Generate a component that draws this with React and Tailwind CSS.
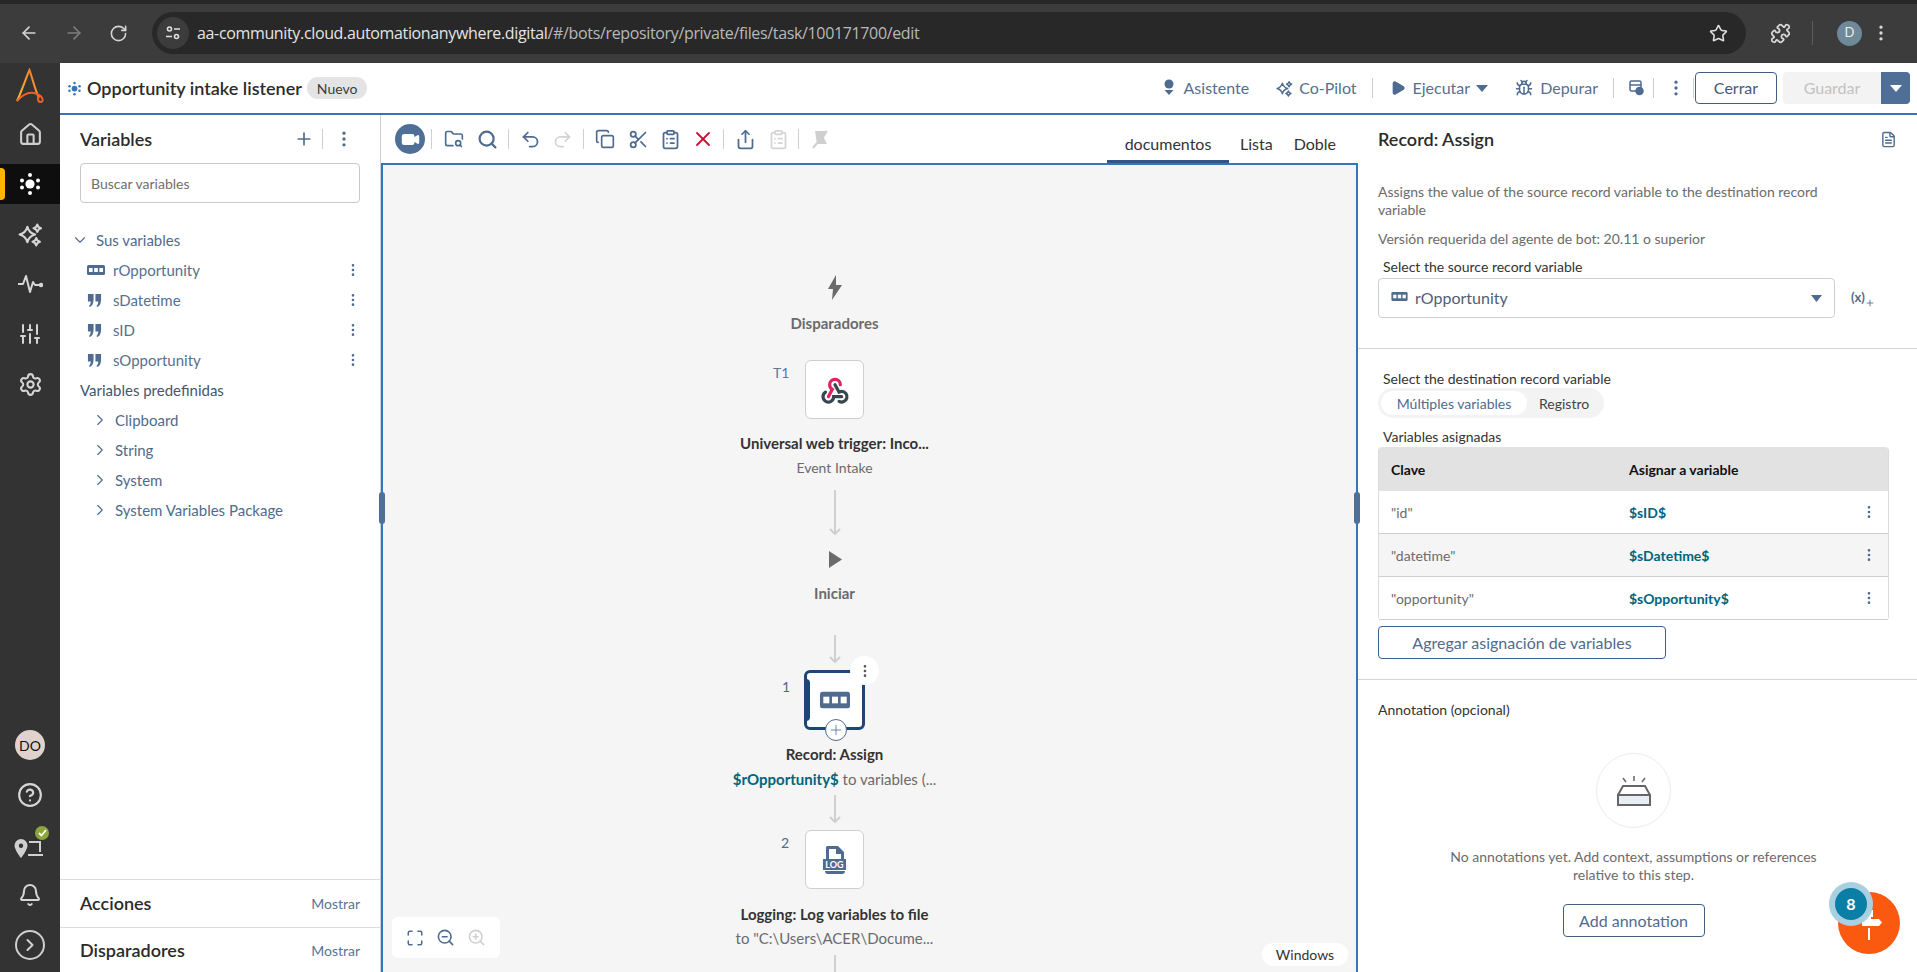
import React from 'react';
import { ArrowLeft, ArrowRight, RotateCw, Star, Puzzle, EllipsisVertical, House, SlidersVertical, Settings, CircleHelp, Bell, ChevronRight, ChevronDown, Plus, Search, Undo2, Redo2, Copy, Scissors, ClipboardList, X, Share, Bug, Play, FileText, Maximize, ZoomIn, ZoomOut, FolderSearch, Video } from 'lucide-react';

const FONT = "font-['Lato','Open_Sans',sans-serif]";
const Dots = ({ c = '#fff', className = '' }) => (
  <svg viewBox="0 0 24 24" className={className}>
    <circle cx="12" cy="12" r="4.6" fill={c} />
    {[[12, 3], [12, 21], [4, 8.5], [20, 8.5], [4, 15.5], [20, 15.5]].map(([x, y], i) => <circle key={i} cx={x} cy={y} r="2" fill={c} />)}
  </svg>
);
const star = (x, y, r) => `M${x} ${y - r}Q${x + r * .2} ${y - r * .2} ${x + r} ${y}Q${x + r * .2} ${y + r * .2} ${x} ${y + r}Q${x - r * .2} ${y + r * .2} ${x - r} ${y}Q${x - r * .2} ${y - r * .2} ${x} ${y - r}Z`;
const Sparkle = ({ c, className, w = 2 }) => (
  <svg viewBox="0 0 24 24" className={className} fill="none" stroke={c} strokeWidth={w} strokeLinejoin="round">
    <path d={star(9, 12, 7.5)} /><path d={star(18.5, 6, 3.6)} /><path d={star(17.5, 19, 3.6)} />
  </svg>
);
const Rec = ({ className }) => (
  <svg viewBox="0 0 18 10" className={className}>
    <rect width="18" height="10" rx="1.5" fill="#4f6b8f" />
    <rect x="2" y="3" width="3.6" height="4" fill="#fff" /><rect x="7.2" y="3" width="3.6" height="4" fill="#fff" /><rect x="12.4" y="3" width="3.6" height="4" fill="#fff" />
  </svg>
);
const Quote = ({ className }) => (
  <svg viewBox="0 0 16 16" className={className} fill="#4f6b8f">
    <path d="M1 1h6v6.5C7 11 5.5 14 3 15L2 13.8C3.4 12.8 4 11 4 9H1zM9 1h6v6.5c0 3.5-1.5 6.5-4 7.500L10 13.800c1.400-1 2-2.800 2-4.800H9z" />
  </svg>
);
const Arrow = ({ h, className = '' }) => (
  <svg width="14" height={h} viewBox={`0 0 14 ${h}`} className={className} fill="none" stroke="#cfcfcf" strokeWidth="2">
    <path d={`M7 0V${h - 1}M2 ${h - 6}L7 ${h - 1}L12 ${h - 6}`} />
  </svg>
);
const Sep = ({ h = 'h-5' }) => <div className={`w-px ${h} bg-[#cfcfcf]`} />;
const VarRow = ({ icon, name }) => (
  <div className="flex h-[30px] items-center pl-[27px] pr-[19px]">
    <div className="flex w-[26px] items-center">{icon}</div>
    <span className="flex-1 text-[15px] text-[#56708f]">{name}</span>
    <EllipsisVertical size={16} color="#4f6b8f" />
  </div>
);
const TreeRow = ({ name }) => (
  <div className="flex h-[30px] items-center pl-[31px] text-[15px] text-[#4f6b8f]">
    <ChevronRight size={18} color="#4f6b8f" strokeWidth={1.5} className="mr-[6px]" />
    {name}
  </div>
);
const NavCell = ({ children, active }) => (
  <div className="flex h-[50px] shrink-0 items-center justify-center">
    {active ? (
      <div className="relative flex h-10 w-full items-center justify-center bg-[#0e0e0e]">
        <div className="absolute left-0 top-1 h-8 w-[5px] rounded-r bg-[#ffb500]" />
        {children}
      </div>
    ) : children}
  </div>
);
const TB = ({ x, children }) => <div className={`flex h-8 items-center justify-center ${x}`}>{children}</div>;
const Row = ({ k, v, alt }) => (
  <div className={`flex h-[43px] items-center border-b border-[#cfcfcf] pl-3 pr-[11px] text-[14px] ${alt ? 'bg-[#f5f5f5]' : 'bg-white'}`}>
    <span className="w-[238px] text-[#6b6b6b]">{k}</span>
    <span className="flex-1 font-bold text-[#00647e]">{v}</span>
    <EllipsisVertical size={16} color="#4f6b8f" />
  </div>
);

export default function App() {
  const c = '#4f6b8f';
  return (
    <div className={`flex h-[972px] w-[1917px] flex-col overflow-hidden bg-white ${FONT}`}>
      {/* browser */}
      <div className="h-[63px] shrink-0 border-t-4 border-[#272727] bg-[#3c3c3c]">
        <div className="flex h-[59px] items-center pb-[1px]">
          <div className="flex w-[152px] shrink-0 items-center pl-[19px]">
            <ArrowLeft size={20} color="#d5d5d5" />
            <ArrowRight size={20} color="#7c7c7c" className="ml-[25px]" />
            <RotateCw size={19} color="#d5d5d5" className="ml-[25px]" />
          </div>
          <div className="flex h-[42px] w-[1594px] items-center rounded-full bg-[#282828] pl-[5px] pr-[18px]">
            <div className="flex h-8 w-8 items-center justify-center rounded-full bg-[#3c3c3c]">
              <svg width="16" height="16" viewBox="0 0 16 16" fill="none" stroke="#e0e0e0" strokeWidth="1.6"><circle cx="4.500" cy="4" r="2" /><path d="M9 4h6M1 11.500h6" /><circle cx="11.500" cy="11.500" r="2" /></svg>
            </div>
            <span className="ml-[8px] flex-1 font-['Open_Sans',sans-serif] text-[16px] tracking-[-0.35px] text-[#e4e4e4]">aa-community.cloud.automationanywhere.digital<span className="text-[#b8b8b8]">/#/bots/repository/private/files/task/100171700/edit</span></span>
            <Star size={19} color="#e0e0e0" />
          </div>
          <Puzzle size={21} color="#d8d8d8" className="ml-[24px]" />
          <div className="ml-[21px] h-6 w-px bg-[#5c5c5c]" />
          <div className="ml-[24px] flex h-[25px] w-[25px] items-center justify-center rounded-full bg-[#6e8a99] text-[13px] text-[#eee]">D</div>
          <EllipsisVertical size={20} color="#d8d8d8" className="ml-[9px]" />
        </div>
      </div>

      <div className="flex min-h-0 flex-1">
        {/* nav */}
        <nav className="flex w-[60px] shrink-0 flex-col bg-[#333333]">
          <div className="flex h-[46px] items-center justify-center">
            <svg width="30" height="36" viewBox="0 0 30 36" fill="none" strokeWidth="2">
              <defs><linearGradient id="lg" x1="0" y1="1" x2="1" y2="0"><stop offset="0" stopColor="#fcc02d" /><stop offset="1" stopColor="#f2742c" /></linearGradient></defs>
              <path d="M2 33C7 22 11 10 14.500 2C18 12 20 22 24 30" stroke="url(#lg)" />
              <path d="M2 33C9 25 17 23 24 27C28 29 29 34 25.500 34C22.500 34 22.500 30 24 28" stroke="#e8622c" />
            </svg>
          </div>
          <NavCell><House size={25} color="#cfcfcf" strokeWidth={2} /></NavCell>
          <NavCell active><Dots className="h-6 w-6" /></NavCell>
          <NavCell><Sparkle c="#d5d5d5" className="h-[25px] w-[25px]" /></NavCell>
          <NavCell>
            <svg width="26" height="20" viewBox="0 0 26 20" fill="none" stroke="#d5d5d5" strokeWidth="2" strokeLinejoin="round"><path d="M1 10h5l3-8 4 16 3-10 2 3h6" /><circle cx="24" cy="11" r="1.200" fill="#d5d5d5" /></svg>
          </NavCell>
          <NavCell><SlidersVertical size={24} color="#d5d5d5" /></NavCell>
          <NavCell><Settings size={25} color="#d5d5d5" /></NavCell>
          <div className="mt-auto flex flex-col pb-[2px]">
            <NavCell><div className="flex h-[30px] w-[30px] items-center justify-center rounded-full bg-[#e0d3cd] text-[14px] text-[#111]">DO</div></NavCell>
            <NavCell><CircleHelp size={26} color="#d5d5d5" /></NavCell>
            <NavCell>
              <div className="relative h-8 w-8">
                <svg width="30" height="26" viewBox="0 0 30 26" className="absolute left-0 top-2" fill="#cfcfcf"><path d="M7 2a6.500 6.500 0 0 0-6.500 6.500C.5 13 7 21 7 21s6.500-8 6.500-12.500A6.500 6.500 0 0 0 7 2zm0 4.500a2.200 2.200 0 1 1 0 4.400 2.200 2.200 0 0 1 0-4.400z" /><path d="M15 6h10v9h2V4H15zM14 17h15v2H14z" /><path d="M18 6v11h2V6z" opacity="0" /></svg>
                <div className="absolute -right-[3px] -top-[3px] flex h-[14px] w-[14px] items-center justify-center rounded-full bg-[#8aa63a]">
                  <svg width="9" height="8" viewBox="0 0 9 8" fill="none" stroke="#fff" strokeWidth="1.800"><path d="M1 4l2.500 2.500L8 1" /></svg>
                </div>
              </div>
            </NavCell>
            <NavCell><Bell size={24} color="#d5d5d5" /></NavCell>
            <NavCell><div className="flex h-[30px] w-[30px] items-center justify-center rounded-full border-2 border-[#cfcfcf]"><ChevronRight size={20} color="#cfcfcf" strokeWidth={2.500} /></div></NavCell>
          </div>
        </nav>

        <div className="flex min-w-0 flex-1 flex-col">
          {/* header */}
          <header className="flex h-[52px] shrink-0 items-center border-b-2 border-[#3276bd] pl-[7px] pr-[7px]">
            <Dots c="#3276bd" className="h-[15px] w-[15px]" />
            <span className="ml-[5px] text-[18px] font-semibold text-[#2b2b2b]">Opportunity intake listener</span>
            <span className="ml-[5px] flex h-[22px] items-center rounded-full bg-[#e4e4e4] px-[10px] text-[14px] text-[#3c3c3c]">Nuevo</span>
            <div className="ml-auto flex items-center text-[16px] text-[#56708f]">
              <svg width="14" height="18" viewBox="0 0 14 18" fill={c}><circle cx="7" cy="5" r="4.500" /><path d="M2.500 11h9L7 16z" /></svg>
              <span className="ml-[8px]">Asistente</span>
              <Sparkle c={c} className="ml-[27px] h-[17px] w-[17px]" />
              <span className="ml-[6px]">Co-Pilot</span>
              <div className="ml-[15px]"><Sep /></div>
              <Play size={16} fill={c} color={c} className="ml-[17px]" />
              <span className="ml-[7px]">Ejecutar</span>
              <svg width="12" height="7" viewBox="0 0 12 7" className="ml-[6px]" fill={c}><path d="M0 0h12L6 7z" /></svg>
              <Bug size={18} color={c} className="ml-[27px]" />
              <span className="ml-[7px]">Depurar</span>
              <div className="ml-[15px]"><Sep /></div>
              <svg width="15" height="16" viewBox="0 0 15 16" className="ml-[15px]" fill="none" stroke={c} strokeWidth="1.500"><rect x="1" y="1" width="11" height="10" rx="1.500" /><path d="M1 5h11" /><circle cx="10.500" cy="11" r="3.500" fill={c} /></svg>
              <div className="ml-[9px]"><Sep /></div>
              <EllipsisVertical size={20} color={c} className="ml-[12px]" />
              <div className="ml-[7px]"><Sep /></div>
              <button className="ml-[1px] flex h-[32px] w-[82px] items-center justify-center rounded border border-[#3f5f85] text-[16px] text-[#44597a]">Cerrar</button>
              <div className="ml-[6px] flex h-[32px] w-[127px] overflow-hidden rounded">
                <div className="flex w-[98px] items-center justify-center bg-[#f3f3f3] text-[#c2c2c2]">Guardar</div>
                <div className="flex flex-1 items-center justify-center bg-[#4f6f97]"><svg width="12" height="7" viewBox="0 0 12 7" fill="#fff"><path d="M0 0h12L6 7z" /></svg></div>
              </div>
            </div>
          </header>

          <div className="flex min-h-0 flex-1">
            {/* left panel */}
            <aside className="flex w-[320px] shrink-0 flex-col">
              <div className="flex h-[48px] shrink-0 items-center pl-5 pr-[26px]">
                <span className="flex-1 text-[18px] font-semibold text-[#2b2b2b]">Variables</span>
                <Plus size={20} color={c} />
                <div className="mx-[8px]"><Sep /></div>
                <EllipsisVertical size={20} color={c} className="ml-[3px]" />
              </div>
              <div className="mx-5 flex h-10 shrink-0 items-center rounded border border-[#c9c9c9] pl-[10px] text-[14px] text-[#6f6f6f]">Buscar variables</div>
              <div className="mt-[22px] flex h-[30px] items-center pl-[11px] text-[15px] text-[#4f6b8f]">
                <ChevronDown size={18} color={c} strokeWidth={1.500} className="mr-[7px]" />Sus variables
              </div>
              <VarRow icon={<Rec className="h-[10px] w-[18px]" />} name="rOpportunity" />
              <VarRow icon={<Quote className="h-[15px] w-[15px]" />} name="sDatetime" />
              <VarRow icon={<Quote className="h-[15px] w-[15px]" />} name="sID" />
              <VarRow icon={<Quote className="h-[15px] w-[15px]" />} name="sOpportunity" />
              <div className="flex h-[30px] items-center pl-5 text-[15px] text-[#44566e]">Variables predefinidas</div>
              <TreeRow name="Clipboard" />
              <TreeRow name="String" />
              <TreeRow name="System" />
              <TreeRow name="System Variables Package" />
              <div className="mt-auto flex h-[48px] items-center border-t border-[#dcdcdc] pl-5 pr-5">
                <span className="flex-1 text-[18px] font-semibold text-[#2b2b2b]">Acciones</span>
                <span className="text-[14px] text-[#5c7393]">Mostrar</span>
              </div>
              <div className="flex h-[45px] items-center border-t border-[#dcdcdc] pl-5 pr-5">
                <span className="flex-1 text-[18px] font-semibold text-[#2b2b2b]">Disparadores</span>
                <span className="text-[14px] text-[#5c7393]">Mostrar</span>
              </div>
            </aside>

            {/* center */}
            <main className="relative flex w-[978px] shrink-0 flex-col border-l border-[#cfcfcf]">
              <div className="relative flex h-[48px] shrink-0 items-center pl-[14px]">
                <div className="flex h-[30px] w-[30px] items-center justify-center rounded-full bg-[#4f6f97]"><Video size={19} color="#fff" fill="#fff" /></div>
                <div className="ml-[6px]"><Sep h="h-[20px]" /></div>
                <TB x="ml-[10px] w-[24px]"><FolderSearch size={20} color={c} /></TB>
                <TB x="ml-[9px] w-[24px]"><Search size={21} color={c} strokeWidth={2.500} /></TB>
                <div className="ml-[9px]"><Sep h="h-[20px]" /></div>
                <TB x="ml-[9px] w-[24px]"><Undo2 size={21} color={c} /></TB>
                <TB x="ml-[8px] w-[24px]"><Redo2 size={21} color="#d4d4d4" /></TB>
                <div className="ml-[9px]"><Sep h="h-[20px]" /></div>
                <TB x="ml-[9px] w-[24px]"><Copy size={20} color={c} /></TB>
                <TB x="ml-[9px] w-[24px]"><Scissors size={21} color={c} /></TB>
                <TB x="ml-[8px] w-[24px]"><ClipboardList size={21} color={c} /></TB>
                <TB x="ml-[9px] w-[24px]"><X size={26} color="#c8102e" strokeWidth={1.800} /></TB>
                <div className="ml-[8px]"><Sep h="h-[20px]" /></div>
                <TB x="ml-[9px] w-[24px]"><Share size={21} color={c} /></TB>
                <TB x="ml-[9px] w-[24px]"><ClipboardList size={21} color="#d4d4d4" /></TB>
                <div className="ml-[8px]"><Sep h="h-[20px]" /></div>
                <TB x="ml-[9px] w-[24px]">
                  <svg width="20" height="20" viewBox="0 0 20 20"><path d="M5 2h12l-3 7 3 6H7z" fill="#cfcfcf" /><path d="M3 19L17 2" stroke="#cfcfcf" strokeWidth="2" /></svg>
                </TB>
                <div className="ml-auto flex h-full items-end pr-[22px] text-[16px] text-[#333]">
                  <div className="flex h-[36px] w-[122px] items-start justify-center border-b-[3px] border-[#2f5788] pt-[5px]">documentos</div>
                  <div className="ml-[11px] flex h-[36px] items-start pt-[5px]">Lista</div>
                  <div className="ml-[21px] flex h-[36px] items-start pt-[5px]">Doble</div>
                </div>
              </div>
              <div className="relative min-h-0 flex-1 overflow-hidden border-2 border-b-0 border-[#3276bd] bg-[#f5f5f5]">
                <div className="flex flex-col items-center pr-[70px] pt-[110px] text-center">
                  <svg width="16" height="25" viewBox="0 0 16 25" fill="#6b6b6b"><path d="M9 0L1 14h5l-1 11 10-15H9z" /></svg>
                  <div className="mt-[13px] h-5 text-[15px] font-bold leading-5 text-[#6b6b6b]">Disparadores</div>
                  <div className="relative mt-[27px] flex h-[59px] w-[59px] items-center justify-center rounded-md border border-[#cfcfcf] bg-white">
                    <span className="absolute -left-[33px] top-[1px] text-[14px] text-[#5c7a9f]">T1</span>
                    <svg width="32" height="32" viewBox="0 0 24 24" fill="none" strokeWidth="2.400" strokeLinecap="round">
                      <path d="M4.876 13.61a4 4 0 1 0 6.124 3.39h6" stroke="#37474f" />
                      <path d="M15.066 20.502a4 4 0 1 0 1.934 -7.502c-.706 0 -1.424 .179 -2 .5l-3 -5.5" stroke="#37474f" />
                      <path d="M16 8a4 4 0 1 0 -8 0c0 1.506 .77 2.818 2 3.5l-3 5.5" stroke="#e0245e" />
                    </svg>
                  </div>
                  <div className="mt-[14px] h-5 text-[15px] font-bold leading-5 text-[#333]">Universal web trigger: Inco...</div>
                  <div className="mt-[5px] h-5 text-[14px] leading-5 text-[#6b6b6b]">Event Intake</div>
                  <Arrow h={45} className="mt-[12px]" />
                  <svg width="14" height="25" viewBox="0 0 14 25" className="mt-[12px]" fill="#6b6b6b"><path d="M1 4l13 8.500L1 21z" /></svg>
                  <div className="mt-[11px] h-5 text-[15px] font-bold leading-5 text-[#6b6b6b]">Iniciar</div>
                  <Arrow h={28} className="mt-[32px]" />
                  <div className="relative mt-[7px] flex h-[60px] w-[61px] items-center justify-center rounded-md border-[3px] border-[#1c4775] bg-white">
                    <div className="absolute -left-[3px] top-[6px] h-[42px] w-[6px] rounded-r-sm bg-[#1c4775]" />
                    <span className="absolute -left-[25px] top-[3px] text-[14px] text-[#4f6b8f]">1</span>
                    <div className="absolute -right-[17px] -top-[17px] flex h-[29px] w-[29px] items-center justify-center rounded-full bg-white"><EllipsisVertical size={16} color="#555" /></div>
                    <div className="absolute -bottom-[14px] left-[18px] flex h-[22px] w-[22px] items-center justify-center rounded-full border border-[#4f6b8f] bg-white"><Plus size={16} color={c} strokeWidth={1.200} /></div>
                    <Rec className="h-[18px] w-[30px]" />
                  </div>
                  <div className="mt-[14px] h-5 text-[15px] font-bold leading-5 text-[#333]">Record: Assign</div>
                  <div className="mt-[5px] h-5 text-[15px] leading-5 text-[#6b6b6b]"><b className="font-bold text-[#00647e]">$rOpportunity$</b> to variables (...</div>
                  <Arrow h={28} className="mt-[6px]" />
                  <div className="relative mt-[7px] flex h-[59px] w-[59px] items-center justify-center rounded-md border border-[#cfcfcf] bg-white">
                    <span className="absolute -left-[25px] top-[1px] text-[14px] text-[#4f6b8f]">2</span>
                    <div className="flex flex-col items-center">
                      <svg width="22" height="13" viewBox="0 0 22 13" fill={c}><path d="M2 13V1.500A1.500 1.500 0 0 1 3.500 0H14l6 6v7h-3V8h-5V3H5v10z" /></svg>
                      <span className="flex h-[11px] w-[23px] items-center justify-center bg-[#4f6b8f] text-[9px] font-bold leading-none text-white">LOG</span>
                      <div className="mt-[1px] h-[3px] w-[20px] rounded-b bg-[#4f6b8f]" />
                    </div>
                  </div>
                  <div className="mt-[15px] h-5 text-[15px] font-bold leading-5 text-[#333]">Logging: Log variables to file</div>
                  <div className="mt-[4px] h-5 text-[15px] leading-5 text-[#6b6b6b]">to "C:\Users\ACER\Docume...</div>
                  <Arrow h={28} className="mt-[7px]" />
                </div>
                <div className="absolute bottom-[14px] left-[9px] flex h-[41px] w-[108px] items-center justify-around rounded-md bg-white px-[8px]">
                  <Maximize size={18} color={c} /><ZoomOut size={19} color={c} /><ZoomIn size={19} color="#cfcfcf" />
                </div>
                <div className="absolute bottom-[6px] right-[8px] flex h-[23px] w-[86px] items-center justify-center rounded-full bg-white text-[14px] text-[#333]">Windows</div>
              </div>
              <div className="absolute left-[-2px] top-[377px] h-[32px] w-[6px] rounded bg-[#4f6f97]" />
              <div className="absolute right-[-2px] top-[377px] h-[32px] w-[6px] rounded bg-[#4f6f97]" />
            </main>

            {/* right panel */}
            <section className="relative flex min-w-0 flex-1 flex-col">
              <div className="flex h-[48px] shrink-0 items-center pl-5 pr-[20px]">
                <span className="flex-1 text-[18px] font-semibold text-[#2b2b2b]">Record: Assign</span>
                <FileText size={17} color={c} />
              </div>
              <div className="mt-[20px] w-[510px] pl-5 text-[14px] leading-[18px] text-[#6b6b6b]">Assigns the value of the source record variable to the destination record variable</div>
              <div className="mt-[11px] pl-5 text-[14px] leading-[18px] text-[#6b6b6b]">Versión requerida del agente de bot: 20.11 o superior</div>
              <div className="mt-[10px] pl-[25px] text-[14px] leading-[18px] text-[#333]">Select the source record variable</div>
              <div className="ml-5 mt-[2px] flex items-center">
                <div className="flex h-10 w-[457px] items-center rounded border border-[#cfcfcf] pl-3 pr-[12px] text-[16px] text-[#4f5f74]">
                  <Rec className="mb-[3px] mr-[7px] h-[9px] w-[17px]" />
                  <span className="flex-1">rOpportunity</span>
                  <svg width="11" height="7" viewBox="0 0 11 7" fill={c}><path d="M0 0h11L5.500 7z" /></svg>
                </div>
                <span className="ml-[16px] text-[13px] font-bold text-[#4f6b8f]">(x)</span>
                <Plus size={10} color={c} className="mt-[10px]" />
              </div>
              <div className="mt-[30px] h-px bg-[#d4d4d4]" />
              <div className="mt-[21px] pl-[25px] text-[14px] leading-[18px] text-[#333]">Select the destination record variable</div>
              <div className="ml-5 flex h-[30px] w-[226px] items-center rounded-full bg-[#f3f3f3] pl-[3px] text-[14px]">
                <div className="flex h-[24px] w-[146px] items-center justify-center rounded-full bg-white text-[#4f6b8f]">Múltiples variables</div>
                <span className="ml-[12px] text-[#444]">Registro</span>
              </div>
              <div className="mt-[10px] pl-[25px] text-[14px] leading-[18px] text-[#333]">Variables asignadas</div>
              <div className="ml-5 mt-[1px] w-[511px] rounded border-x border-[#dcdcdc]">
                <div className="flex h-[44px] items-center rounded-t bg-[#e2e2e2] pl-3 text-[14px] font-bold text-[#111]">
                  <span className="w-[238px]">Clave</span><span>Asignar a variable</span>
                </div>
                <Row k={'"id"'} v="$sID$" />
                <Row k={'"datetime"'} v="$sDatetime$" alt />
                <Row k={'"opportunity"'} v="$sOpportunity$" />
              </div>
              <button className="ml-5 mt-[6px] flex h-[33px] w-[288px] items-center justify-center rounded border border-[#3f5f85] text-[16px] text-[#4f6b8f]">Agregar asignación de variables</button>
              <div className="mt-[20px] h-px bg-[#d4d4d4]" />
              <div className="mt-[21px] pl-5 text-[14px] leading-[18px] text-[#333]">Annotation (opcional)</div>
              <div className="ml-5 flex w-[511px] flex-col items-center">
                <div className="mt-[34px] flex h-[75px] w-[75px] items-center justify-center rounded-full border border-[#ececec]">
                  <svg width="38" height="32" viewBox="0 0 38 32" fill="none" stroke="#666" strokeWidth="2">
                    <path d="M19 1v5M8 3l3 4M30 3l-3 4" strokeWidth="1.500" />
                    <path d="M3 20L8 11H30L35 20V30H3Z" />
                    <path d="M3 20H35V30H3Z" fill="#e8eef5" />
                  </svg>
                </div>
                <div className="mt-[20px] w-[370px] text-center text-[14px] leading-[18px] text-[#6b6b6b]">No annotations yet. Add context, assumptions or references relative to this step.</div>
                <button className="mt-[20px] flex h-[33px] w-[142px] items-center justify-center rounded border border-[#3f5f85] text-[16px] text-[#4f6b8f]">Add annotation</button>
              </div>
              <div className="absolute bottom-[18px] right-[17px] flex h-[62px] w-[62px] items-center justify-center rounded-full bg-[#fa5a0f]">
                <svg width="26" height="34" viewBox="0 0 26 34" fill="#fff"><path d="M12 0h2v4h-2zM3 4h14v7H3L0 7.500zM6 13h17l3 3.500-3 3.500H6zM12 22h2v12h-2zM11 11h4v2h-4z" /></svg>
              </div>
              <div className="absolute bottom-[46px] right-[44px] flex h-[44px] w-[44px] items-center justify-center rounded-full bg-[#a9d0e0]">
                <div className="flex h-8 w-8 items-center justify-center rounded-full bg-[#0a7ea4] text-[16px] font-bold text-white">8</div>
              </div>
            </section>
          </div>
        </div>
      </div>
    </div>
  );
}
